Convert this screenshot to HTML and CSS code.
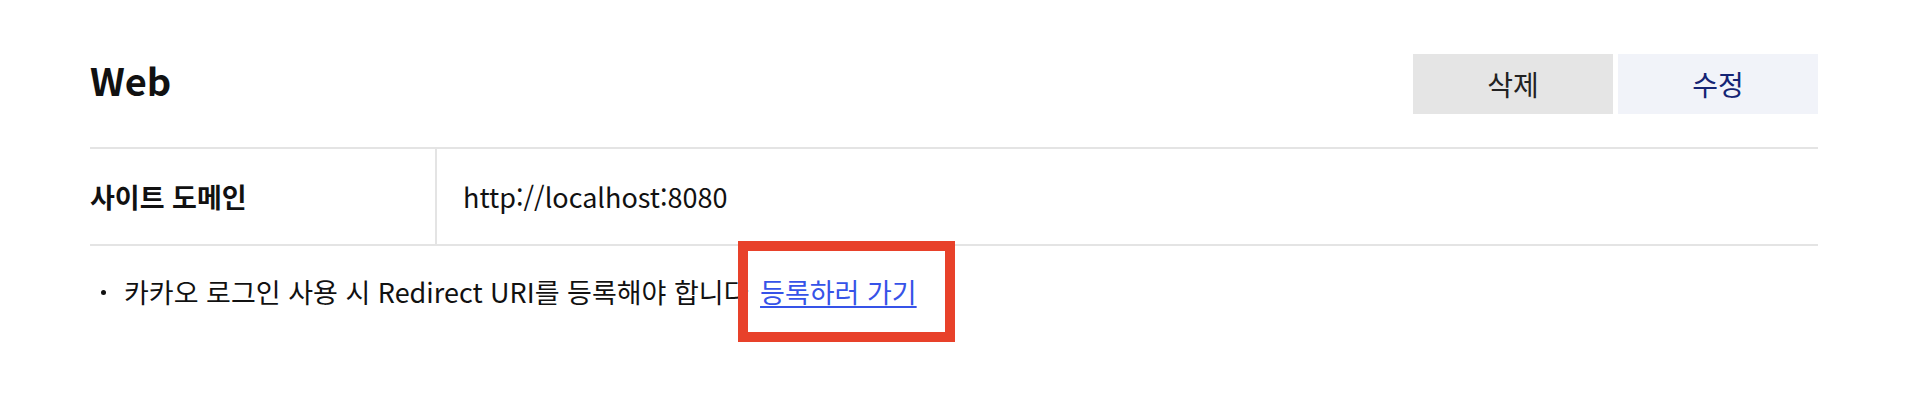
FILE: index.html
```html
<!DOCTYPE html>
<html lang="ko">
<head>
<meta charset="utf-8">
<title>Web</title>
<link rel="stylesheet" href="styles.css">
</head>
<body>
<div class="app">
  <header class="head">
    <h2 class="title">Web</h2>
    <div class="actions">
      <button class="btn btn-del" type="button">삭제</button>
      <button class="btn btn-edit" type="button">수정</button>
    </div>
  </header>
  <div class="table">
    <div class="row">
      <div class="th">사이트 도메인</div>
      <div class="td">http://localhost:8080</div>
    </div>
  </div>
  <ul class="notes">
    <li>카카오 로그인 사용 시 Redirect URI를 등록해야 합니다 <span class="link-wrap"><a class="link" href="#">등록하러 가기</a><span class="mark"></span></span></li>
  </ul>
</div>
</body>
</html>
```

FILE: styles.css
```css
* { box-sizing: border-box; }
html, body { margin: 0; padding: 0; background: #fff; }
body {
  font-family: "Noto Sans CJK KR", "Noto Sans", sans-serif;
  color: #111;
  min-height: 414px;
}
.app {
  margin: 0 94px 0 90px;
  padding: 54px 0 72px;
}
.head {
  display: flex;
  align-items: center;
  justify-content: space-between;
  height: 60px;
}
.title {
  margin: 0;
  padding-bottom: 8px;
  font-size: 38px;
  font-weight: 700;
  line-height: 1;
  color: #111;
}
.actions {
  display: flex;
  gap: 5px;
}
.btn {
  width: 200px;
  height: 60px;
  border: 0;
  font-family: inherit;
  font-size: 28px;
  padding: 0;
  cursor: pointer;
}
.btn-del { background: #e5e5e5; color: #222; }
.btn-edit { background: #f1f3f9; color: #142474; }
.table {
  margin-top: 33px;
  border-top: 2px solid #e4e4e4;
  border-bottom: 2px solid #e4e4e4;
}
.row {
  display: grid;
  grid-template-columns: 347px 1fr;
  height: 95px;
}
.th {
  display: flex;
  align-items: center;
  font-size: 27px;
  font-weight: 700;
  border-right: 2px solid #e4e4e4;
}
.td {
  display: flex;
  align-items: center;
  padding-left: 26px;
  font-size: 27px;
}
.notes {
  list-style: none;
  margin: 28px 0 0;
  padding: 0;
}
.notes li {
  position: relative;
  padding-left: 34px;
  font-size: 27px;
  line-height: 36px;
}
.notes li::before {
  content: "";
  position: absolute;
  left: 11px;
  top: 16px;
  width: 5px;
  height: 5px;
  border-radius: 50%;
  background: #111;
}
.link-wrap {
  position: relative;
  display: inline-block;
  margin-left: 4px;
}
.link {
  color: #3653e8;
  text-decoration: underline;
  text-underline-offset: 3px;
}
.mark {
  position: absolute;
  left: -22px;
  right: -38px;
  top: -33px;
  bottom: -32px;
  border: 10px solid #e8412a;
  pointer-events: none;
}
```
